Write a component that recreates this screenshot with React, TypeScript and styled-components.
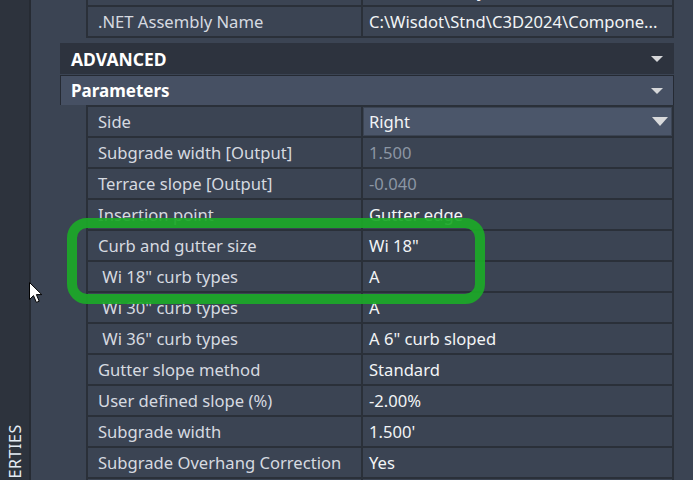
import React from "react";
import styled, { createGlobalStyle } from "styled-components";

const GlobalStyle = createGlobalStyle`
  html, body {
    margin: 0;
    padding: 0;
    background: #3b4453;
  }
  body {
    font-family: "Noto Sans", "Open Sans", sans-serif;
  }
`;

type Row = {
  label: string;
  value: string;
  muted?: boolean;
  select?: boolean;
};

const infoRows: Row[] = [
  { label: "Macro Name", value: "Curb Assembly" },
  { label: ".NET Assembly Name", value: "C:\\Wisdot\\Stnd\\C3D2024\\Compone..." },
];

const paramRows: Row[] = [
  { label: "Side", value: "Right", select: true },
  { label: "Subgrade width [Output]", value: "1.500", muted: true },
  { label: "Terrace slope [Output]", value: "-0.040", muted: true },
  { label: "Insertion point", value: "Gutter edge" },
  { label: "Curb and gutter size", value: "Wi 18\"" },
  { label: " Wi 18\" curb types", value: "A" },
  { label: " Wi 30\" curb types", value: "A" },
  { label: " Wi 36\" curb types", value: "A 6\" curb sloped" },
  { label: "Gutter slope method", value: "Standard" },
  { label: "User defined slope (%)", value: "-2.00%" },
  { label: "Subgrade width", value: "1.500'" },
  { label: "Subgrade Overhang Correction", value: "Yes" },
  { label: "Subgrade Overhang Slope", value: "-4.00%" },
];

export default function App() {
  return (
    <>
      <GlobalStyle />
      <Frame>
        <SideTab>
          <SideLabel>PROPERTIES</SideLabel>
        </SideTab>
        <Panel>
          <PropTable $offset={-24}>
            {infoRows.map((r) => (
              <PropRow key={r.label}>
                <LabelCell>{r.label}</LabelCell>
                <ValueCell>{r.value}</ValueCell>
              </PropRow>
            ))}
          </PropTable>

          <CategoryHeader>
            ADVANCED
            <Caret />
          </CategoryHeader>
          <GroupHeader>
            Parameters
            <Caret />
          </GroupHeader>

          <PropTable $offset={0}>
            {paramRows.map((r) => (
              <PropRow key={r.label}>
                <LabelCell>{r.label}</LabelCell>
                {r.select ? (
                  <ValueCell>
                    <SelectBox>
                      {r.value}
                      <SelectCaret />
                    </SelectBox>
                  </ValueCell>
                ) : (
                  <ValueCell $muted={r.muted}>{r.value}</ValueCell>
                )}
              </PropRow>
            ))}
          </PropTable>
        </Panel>

        <Highlight />
        <Pointer viewBox="0 0 14 22" width="14" height="22">
          <path
            d="M0.5 0.5 L0.5 17.5 L4.5 13.6 L7.4 20.4 L10.2 19.2 L7.4 12.6 L12.8 12.6 Z"
            fill="#ffffff"
            stroke="#000000"
            strokeWidth="1"
            strokeLinejoin="miter"
          />
        </Pointer>
      </Frame>
    </>
  );
}

const Frame = styled.div`
  position: relative;
  display: flex;
  width: 693px;
  height: 480px;
  overflow: hidden;
  background: #3b4453;
`;

const SideTab = styled.div`
  flex: none;
  width: 31px;
  box-sizing: border-box;
  padding-top: 424px;
  display: flex;
  justify-content: center;
  background: #2d333d;
  border-right: 2px solid #262b33;
  overflow: hidden;
`;

const SideLabel = styled.span`
  writing-mode: vertical-rl;
  transform: rotate(180deg);
  height: max-content;
  white-space: nowrap;
  font-size: 16px;
  letter-spacing: 0.6px;
  color: #e3ebf4;
`;

const Panel = styled.div`
  flex: 1;
  display: flex;
  flex-direction: column;
  padding: 0 19px 0 29px;
  min-width: 0;

  & > * {
    flex: none;
  }
`;

const PropTable = styled.div<{ $offset: number }>`
  margin: ${(p) => p.$offset}px 0 0 26px;
  display: flex;
  flex-direction: column;
  gap: 2px;
  background: #2a3039;
  border: 2px solid #2a3039;
  border-top-width: ${(p) => (p.$offset < 0 ? 0 : 2)}px;
`;

const PropRow = styled.div`
  flex: none;
  display: grid;
  grid-template-columns: 273px 1fr;
  column-gap: 2px;
  height: 29px;
`;

const LabelCell = styled.div`
  background: #3b4453;
  color: #d6dae0;
  font-size: 16.6px;
  line-height: 29px;
  padding-left: 10px;
  white-space: pre;
  overflow: hidden;
`;

const ValueCell = styled.div<{ $muted?: boolean }>`
  background: #3b4453;
  color: ${(p) => (p.$muted ? "#8c96a4" : "#f2f4f6")};
  font-size: 16.6px;
  line-height: 29px;
  padding-left: 6px;
  white-space: pre;
  overflow: hidden;
  position: relative;
`;

const SelectBox = styled.div`
  position: absolute;
  inset: 1px;
  background: #4b566a;
  line-height: 27px;
  padding: 0 3px 0 5px;
  display: flex;
  align-items: center;
  justify-content: space-between;
`;

const SelectCaret = styled.span`
  width: 0;
  height: 0;
  border-left: 8px solid transparent;
  border-right: 8px solid transparent;
  border-top: 9px solid #d9dadc;
`;

const CategoryHeader = styled.div`
  margin-top: 5px;
  height: 31px;
  display: flex;
  align-items: center;
  justify-content: space-between;
  padding: 0 11px 0 11px;
  background: #2d333e;
  color: #ffffff;
  font-size: 17.5px;
  font-weight: 700;
`;

const GroupHeader = styled.div`
  margin-top: 1px;
  height: 30px;
  box-sizing: border-box;
  display: flex;
  align-items: center;
  justify-content: space-between;
  padding: 0 10px 0 10px;
  background: #465063;
  border: 1px solid #252a33;
  border-bottom: none;
  color: #ffffff;
  font-size: 17px;
  font-weight: 700;
`;

const Caret = styled.span`
  width: 0;
  height: 0;
  border-left: 6px solid transparent;
  border-right: 6px solid transparent;
  border-top: 6px solid #d6d7d9;
`;

const Highlight = styled.div`
  position: absolute;
  left: 67px;
  top: 218px;
  width: 418px;
  height: 86px;
  box-sizing: border-box;
  border: 10px solid rgba(28, 168, 40, 0.93);
  border-radius: 20px;
  pointer-events: none;
`;

const Pointer = styled.svg`
  position: absolute;
  left: 29px;
  top: 282px;
`;
